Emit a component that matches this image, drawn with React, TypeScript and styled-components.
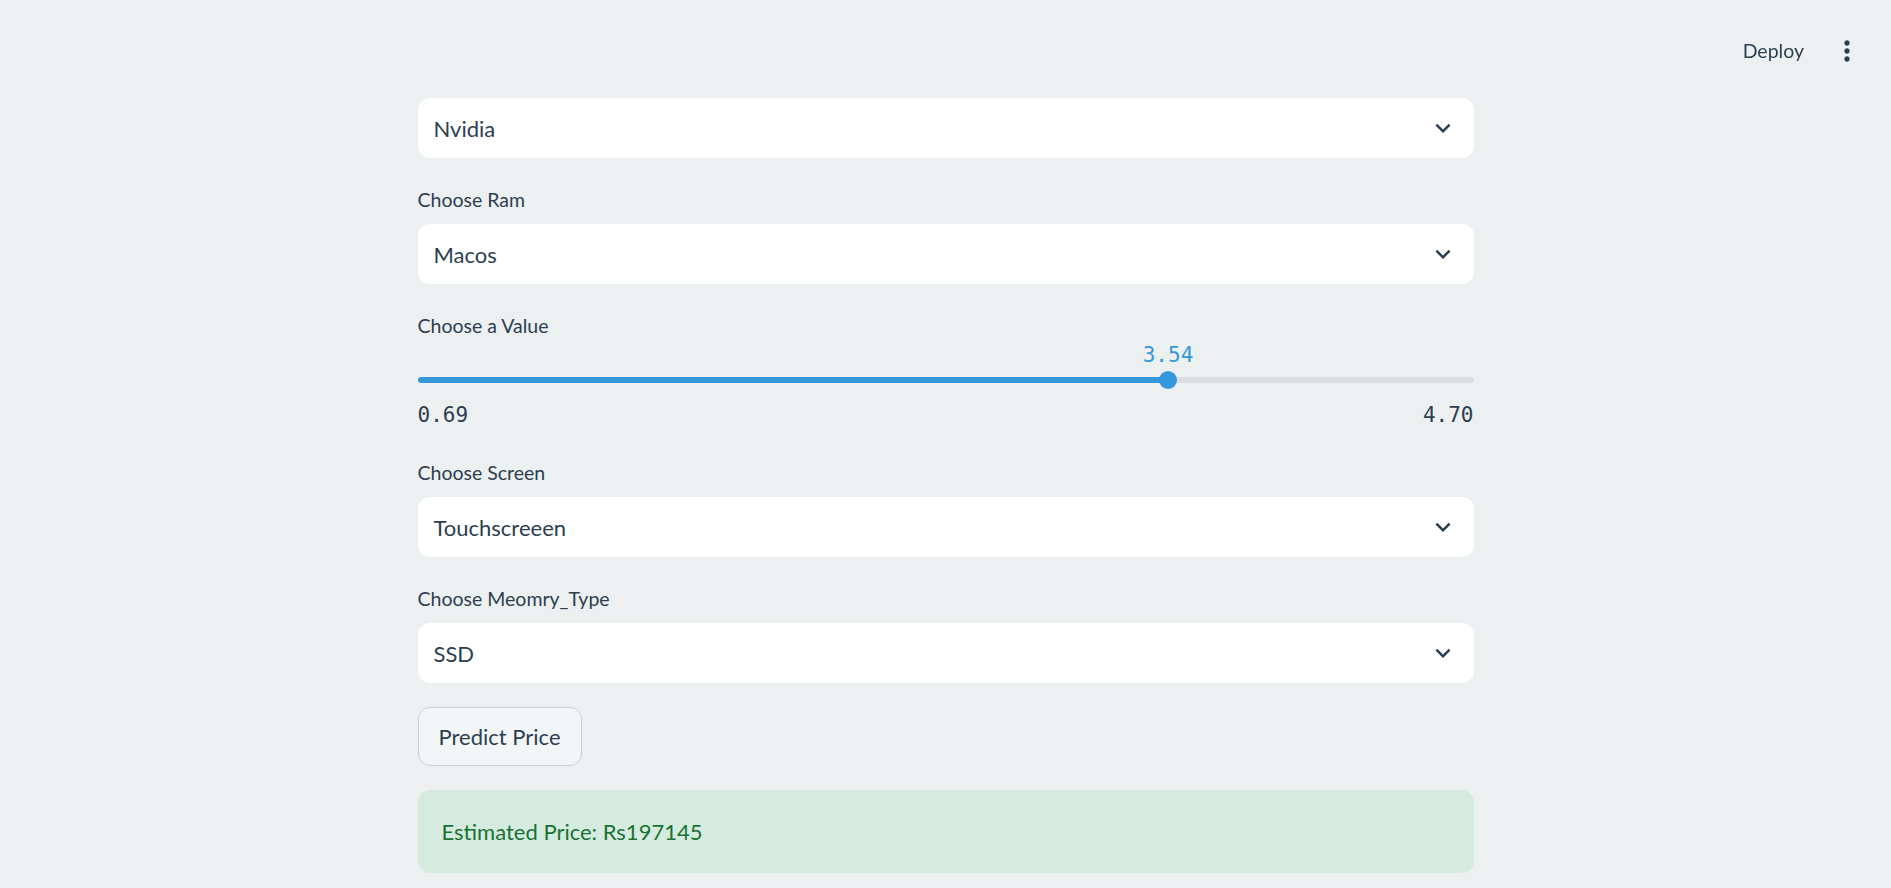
import React from "react";
import styled, { createGlobalStyle } from "styled-components";

const C = {
  bg: "#ECF0F1",
  text: "#2C3E50",
  primary: "#3498DB",
  rail: "#DAE0E2",
};

const GlobalStyle = createGlobalStyle`
  html, body {
    margin: 0;
    padding: 0;
    background: ${C.bg};
  }
  body {
    font-family: "Lato", "Noto Sans", sans-serif;
    color: ${C.text};
  }
  * { box-sizing: border-box; }
`;

const Page = styled.div`
  min-height: 888px;
  background: ${C.bg};
  overflow: hidden;
`;

const Header = styled.header`
  position: fixed;
  top: 0;
  right: 0;
  height: 102px;
  display: flex;
  align-items: center;
  gap: 12px;
  padding-right: 28px;
`;

const DeployButton = styled.button`
  background: none;
  border: none;
  font-family: "Lato", sans-serif;
  font-size: 19.5px;
  line-height: 33.6px;
  color: ${C.text};
  padding: 6px 15px;
  cursor: pointer;
`;

const IconButton = styled.button`
  width: 32px;
  height: 32px;
  padding: 0;
  border: none;
  background: none;
  display: flex;
  align-items: center;
  justify-content: center;
  color: ${C.text};
  cursor: pointer;
`;

const Main = styled.main`
  width: 1056px;
  margin: 0 auto;
  padding-top: 98px;
  display: flex;
  flex-direction: column;
  gap: 24px;
`;

const Field = styled.div`
  display: flex;
  flex-direction: column;
`;

const Label = styled.label`
  display: flex;
  align-items: flex-start;
  min-height: 36px;
  margin-bottom: 6px;
  font-size: 19.5px;
  line-height: 35px;
  color: ${C.text};
`;

const SelectBox = styled.div`
  height: 60px;
  background: #ffffff;
  border-radius: 12px;
  display: flex;
  align-items: center;
  justify-content: space-between;
  padding: 0 16px 0 16px;
  font-size: 22px;
  color: ${C.text};
  cursor: pointer;
`;

const SliderBody = styled.div`
  padding-top: 21px;
  padding-bottom: 4px;
`;

const Track = styled.div`
  position: relative;
  height: 18px;
  display: flex;
  align-items: center;
`;

const Rail = styled.div<{ $pct: number }>`
  width: 100%;
  height: 6px;
  border-radius: 6px;
  background: linear-gradient(
    to right,
    ${C.primary} 0%,
    ${C.primary} ${(p) => p.$pct}%,
    ${C.rail} ${(p) => p.$pct}%,
    ${C.rail} 100%
  );
`;

const Thumb = styled.div<{ $pct: number }>`
  position: absolute;
  top: 0;
  left: calc(${(p) => p.$pct}% - 9px);
  width: 18px;
  height: 18px;
  border-radius: 50%;
  background: ${C.primary};
`;

const ThumbValue = styled.div`
  position: absolute;
  top: -28px;
  left: 50%;
  transform: translateX(-50%);
  font-family: "DejaVu Sans Mono", "Liberation Mono", monospace;
  font-size: 21px;
  line-height: 24px;
  color: ${C.primary};
  white-space: nowrap;
`;

const TickRow = styled.div`
  margin-top: 14px;
  display: flex;
  justify-content: space-between;
  font-family: "DejaVu Sans Mono", "Liberation Mono", monospace;
  font-size: 21px;
  line-height: 24px;
  color: ${C.text};
`;

const Button = styled.button`
  align-self: flex-start;
  height: 59px;
  padding: 0 20px;
  border: 1px solid #cbd1d5;
  border-radius: 12px;
  background: #f3f6f7;
  font-family: "Lato", sans-serif;
  font-size: 22px;
  color: ${C.text};
  cursor: pointer;
`;

const Alert = styled.div`
  background: #d6ebdf;
  border-radius: 12px;
  padding: 22px 24px;
  font-size: 22px;
  line-height: 39px;
  color: #177233;
`;

const Chevron = () => (
  <svg width="30" height="30" viewBox="0 0 24 24" fill={C.text}>
    <path d="M16.59 8.59L12 13.17 7.41 8.59 6 10l6 6 6-6z" />
  </svg>
);

const MoreVert = () => (
  <svg width="32" height="32" viewBox="0 0 24 24" fill={C.text}>
    <path d="M12 8c1.1 0 2-.9 2-2s-.9-2-2-2-2 .9-2 2 .9 2 2 2zm0 2c-1.1 0-2 .9-2 2s.9 2 2 2 2-.9 2-2-.9-2-2-2zm0 6c-1.1 0-2 .9-2 2s.9 2 2 2 2-.9 2-2-.9-2-2-2z" />
  </svg>
);

const Select = ({ value }: { value: string }) => (
  <SelectBox>
    <span>{value}</span>
    <Chevron />
  </SelectBox>
);

const Slider = ({ min, max, value }: { min: number; max: number; value: number }) => {
  const pct = ((value - min) / (max - min)) * 100;
  return (
    <SliderBody>
      <Track>
        <Rail $pct={pct} />
        <Thumb $pct={pct}>
          <ThumbValue>{value.toFixed(2)}</ThumbValue>
        </Thumb>
      </Track>
      <TickRow>
        <span>{min.toFixed(2)}</span>
        <span>{max.toFixed(2)}</span>
      </TickRow>
    </SliderBody>
  );
};

export default function App() {
  return (
    <Page>
      <GlobalStyle />
      <Header>
        <DeployButton>Deploy</DeployButton>
        <IconButton aria-label="Main menu">
          <MoreVert />
        </IconButton>
      </Header>
      <Main>
        <Field>
          <Select value="Nvidia" />
        </Field>
        <Field>
          <Label>Choose Ram</Label>
          <Select value="Macos" />
        </Field>
        <Field>
          <Label>Choose a Value</Label>
          <Slider min={0.69} max={4.7} value={3.54} />
        </Field>
        <Field>
          <Label>Choose Screen</Label>
          <Select value="Touchscreeen" />
        </Field>
        <Field>
          <Label>Choose Meomry_Type</Label>
          <Select value="SSD" />
        </Field>
        <Button>Predict Price</Button>
        <Alert>Estimated Price: Rs197145</Alert>
      </Main>
    </Page>
  );
}
